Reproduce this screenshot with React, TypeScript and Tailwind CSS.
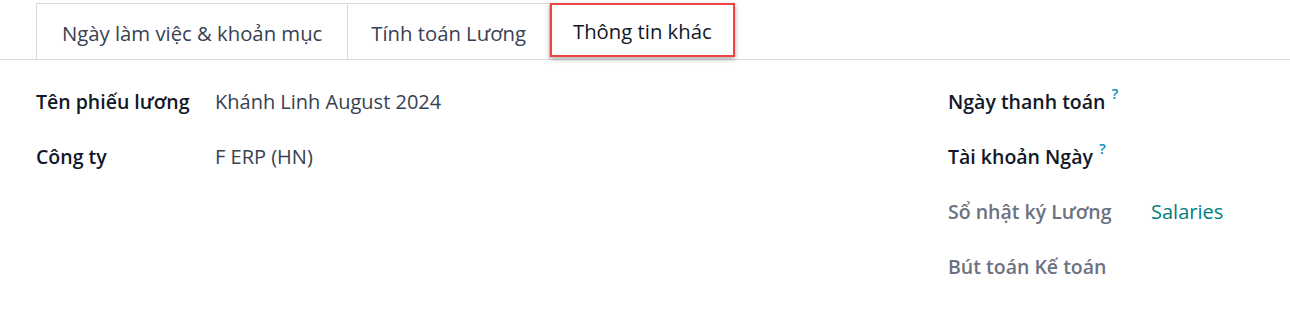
import React from 'react';

const tabs = ['Ngày làm việc & khoản mục', 'Tính toán Lương', 'Thông tin khác'];

function Help() {
  return <sup className="ml-[6px] -top-[10px] text-[15px] font-semibold text-[#0a8fb5]">?</sup>;
}

export default function App() {
  return (
    <div
      className="w-[1290px] h-[310px] bg-white text-[20px] text-[#374151]"
      style={{ fontFamily: '"Open Sans", "Noto Sans", sans-serif' }}
    >
      {/* tabs */}
      <div className="flex pt-[3px] pl-[36px] border-b border-[#d8dadd] h-[60px] text-[20.3px]">
        {tabs.map((t, i) => {
          const active = i === 2;
          return (
            <div
              key={t}
              className={
                active
                  ? 'relative flex items-center pt-[2px] px-[21px] border-[2.5px] border-[#ef4444] h-[54px] bg-white text-[#111827] shadow-[0_2px_5px_rgba(0,0,0,0.35)] z-10'
                  : 'flex items-center pt-[3px] border-l border-t border-[#d8dadd] text-[#374151] h-[57px]' +
                    (i === 1 ? ' border-r px-[23px]' : ' px-[25px]')
              }
            >
              {t}
            </div>
          );
        })}
      </div>

      {/* form */}
      <div className="flex pt-[14px] pl-[36px]">
        <div className="flex flex-col w-[912px]">
          <div className="flex items-center h-[55px]">
            <span className="w-[179px] text-[19.5px] font-semibold text-[#111827]">Tên phiếu lương</span>
            <span>Khánh Linh August 2024</span>
          </div>
          <div className="flex items-center h-[56px]">
            <span className="w-[179px] text-[19.5px] font-semibold text-[#111827]">Công ty</span>
            <span>F ERP (HN)</span>
          </div>
        </div>
        <div className="flex flex-col">
          <div className="flex items-center h-[55px]">
            <span className="w-[203px] text-[19.5px] font-semibold text-[#111827]">
              Ngày thanh toán
              <Help />
            </span>
          </div>
          <div className="flex items-center h-[55px]">
            <span className="w-[203px] text-[19.5px] font-semibold text-[#111827]">
              Tài khoản Ngày
              <Help />
            </span>
          </div>
          <div className="flex items-center h-[55px]">
            <span className="w-[203px] text-[19.5px] font-semibold text-[#6b7280]">Sổ nhật ký Lương</span>
            <span className="text-[#017e84]">Salaries</span>
          </div>
          <div className="flex items-center h-[55px]">
            <span className="w-[203px] text-[19.5px] font-semibold text-[#6b7280]">Bút toán Kế toán</span>
          </div>
        </div>
      </div>
    </div>
  );
}
